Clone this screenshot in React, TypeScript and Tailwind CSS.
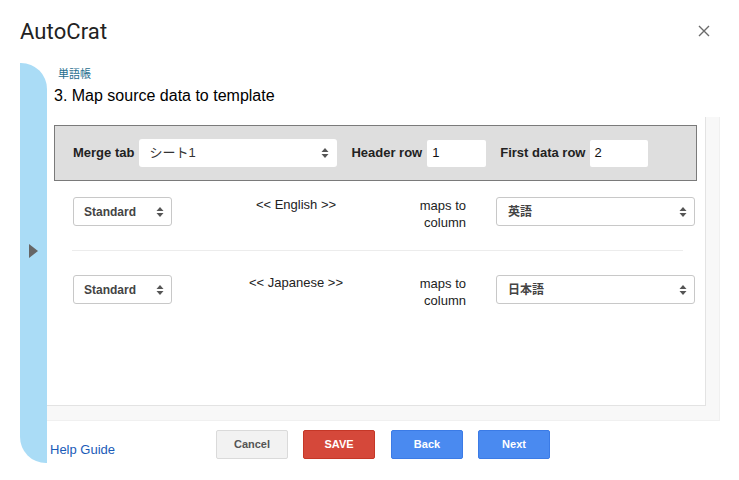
import React from "react";

function Arrows() {
  return (
    <svg width="8" height="12" viewBox="0 0 8 12" className="shrink-0">
      <path d="M4 1 L7.5 5 H0.5 Z" fill="#555" />
      <path d="M4 11 L7.5 7 H0.5 Z" fill="#555" />
    </svg>
  );
}

function MapRow({ label, column }: { label: string; column: string }) {
  return (
    <div className="flex items-start ml-[26px] mr-[10px] h-[53px]">
      <div className="w-[99px] h-[29px] bg-white border border-[#c8c8c8] rounded-[3px] flex items-center justify-between pl-[10px] pr-[7px] text-[12px] font-bold text-[#444]">
        <span>Standard</span>
        <Arrows />
      </div>
      <div className="w-[248px] text-center text-[13px] leading-[16px] text-[#222]">
        {"<< "}
        {label}
        {" >>"}
      </div>
      <div className="-ml-[14px] w-[60px] whitespace-nowrap text-right text-[13px] leading-[17px] text-[#222]">
        maps to
        <br />
        column
      </div>
      <div className="ml-[30px] w-[199px] h-[29px] bg-white border border-[#c8c8c8] rounded-[3px] flex items-center justify-between pl-[11px] pr-[7px] text-[12px] font-bold text-[#444]">
        <span>{column}</span>
        <Arrows />
      </div>
    </div>
  );
}

function App() {
  return (
    <div
      className="w-[739px] h-[480px] bg-white px-[20px] overflow-hidden"
      style={{ fontFamily: '"Liberation Sans", Arial, "Noto Sans CJK JP", sans-serif' }}
    >
      <div className="h-[63px] flex items-center justify-between pb-[1px]">
        <div
          className="text-[22px] text-[#222] tracking-[0.1px]"
          style={{ fontFamily: 'Roboto, "Open Sans", sans-serif' }}
        >
          AutoCrat
        </div>
        <svg width="12" height="12" viewBox="0 0 12 12" className="mr-[9px]">
          <path d="M1 1 L11 11 M11 1 L1 11" stroke="#6b6b6b" strokeWidth="1.4" />
        </svg>
      </div>

      <div className="flex h-[400px]">
        <div className="w-[27px] shrink-0 bg-[#aadcf6] rounded-tr-[26px] rounded-bl-[26px] pt-[181px] pl-[9px]">
          <svg width="9" height="14" viewBox="0 0 9 14">
            <path d="M0 0 L9 7 L0 14 Z" fill="#666" />
          </svg>
        </div>

        <div className="flex-1 flex flex-col">
          <div className="pl-[11px] pt-[4px] h-[18px] text-[11px] leading-[14px] text-[#1e6d8e]">単語帳</div>
          <div className="pl-[7px] pt-[5px] h-[36px] text-[16px] leading-[20px] text-black">
            3. Map source data to template
          </div>

          <div className="bg-[#f8f8f8] border-r border-b border-[#f0f0f0] pr-[13px] pb-[14px]">
            <div className="h-[289px] bg-white border-r border-b border-[#e3e3e3] pt-[8px]">
              <div className="ml-[7px] mr-[8px] h-[56px] bg-[#dedede] border border-[#7a7a7a] flex items-center pl-[18px] text-[13px]">
                <span className="font-bold text-[#222]">Merge tab</span>
                <div className="ml-[5px] w-[198px] h-[28px] bg-white rounded-[3px] flex items-center justify-between pl-[10px] pr-[8px] text-[#333]">
                  <span>シート1</span>
                  <Arrows />
                </div>
                <span className="ml-[14px] font-bold text-[#222]">Header row</span>
                <div className="ml-[5px] w-[59px] h-[27px] bg-white rounded-[2px] flex items-center pl-[5px] text-[#111]">1</div>
                <span className="ml-[14px] font-bold text-[#222]">First data row</span>
                <div className="ml-[5px] w-[58px] h-[27px] bg-white rounded-[2px] flex items-center pl-[4px] text-[#111]">2</div>
              </div>

              <div className="mt-[16px]">
                <MapRow label="English" column="英語" />
                <div className="ml-[25px] mr-[22px] h-px bg-[#ececec]" />
                <div className="h-[24px]" />
                <MapRow label="Japanese" column="日本語" />
              </div>
            </div>
          </div>

          <div className="flex items-start pt-[9px]">
            <div className="w-[169px] pl-[3px] pt-[12px] text-[13px] leading-[16px] text-[#1a5bb8]">Help Guide</div>
            <div className="flex text-[11px] font-bold">
              <div className="w-[72px] h-[29px] rounded-[2px] bg-[#f2f2f2] border border-[#dadada] text-[#555] flex items-center justify-center">
                Cancel
              </div>
              <div className="ml-[15px] w-[72px] h-[29px] rounded-[2px] bg-[#d5483a] border border-[#c53727] text-white flex items-center justify-center">
                SAVE
              </div>
              <div className="ml-[16px] w-[72px] h-[29px] rounded-[2px] bg-[#4a8af0] border border-[#3b7be6] text-white flex items-center justify-center">
                Back
              </div>
              <div className="ml-[15px] w-[72px] h-[29px] rounded-[2px] bg-[#4a8af0] border border-[#3b7be6] text-white flex items-center justify-center">
                Next
              </div>
            </div>
          </div>
        </div>
      </div>
    </div>
  );
}

export default App;
